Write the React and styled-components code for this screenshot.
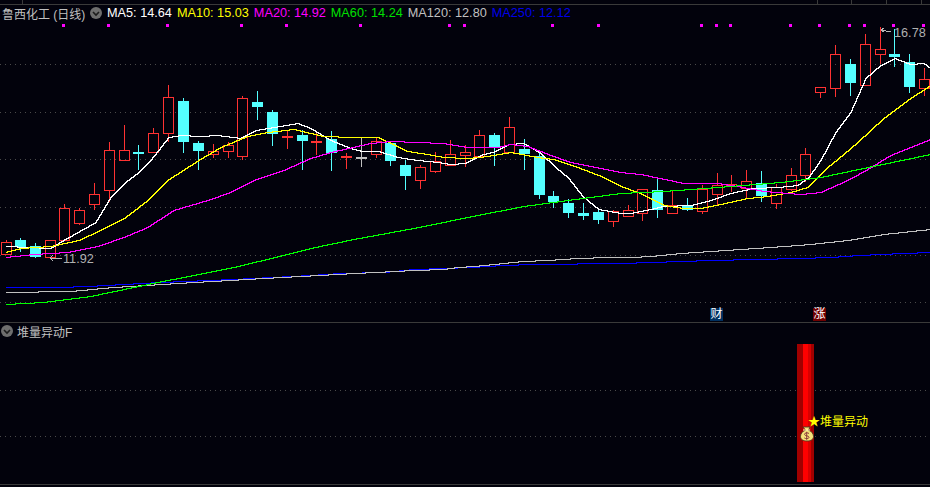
import React from 'react';
import styled, { createGlobalStyle } from 'styled-components';

const GlobalStyle = createGlobalStyle`
  html, body {
    margin: 0;
    padding: 0;
    background: #02020c;
  }
`;

const FONT = `"Liberation Sans", "Noto Sans CJK SC", sans-serif`;

const Page = styled.div`
  width: 930px;
  height: 487px;
  overflow: hidden;
  display: flex;
  flex-direction: column;
  background: #02020c;
  font-family: ${FONT};
`;

const MainPane = styled.div`
  position: relative;
  height: 322px;
  flex: none;
  border-bottom: 1px solid #3a3a3a;
`;

const SubPane = styled.div`
  position: relative;
  flex: 1;
  border-bottom: 1px solid #3a3a3a;
  margin-bottom: 2px;
`;

const Chart = styled.svg`
  display: block;
`;

const Legend = styled.div`
  position: absolute;
  top: 5px;
  left: 2px;
  height: 16px;
  display: flex;
  align-items: center;
  gap: 5px;
  font-size: 12.7px;
  white-space: nowrap;
`;

const SubLegend = styled(Legend)`
  top: 0;
  left: 1px;
  gap: 4px;
  font-size: 12px;
  color: #c0c0c0;
`;

const Title = styled.span`
  width: 81px;
  color: #c0c0c0;
  font-size: 12px;
  margin-right: 2px;
`;

const LegendItem = styled.span`
  color: ${p => p.$color};
`;

const Toggle = styled.span`
  width: 12px;
  height: 12px;
  border-radius: 50%;
  background: #6e6e6e;
  display: flex;
  align-items: center;
  justify-content: center;
`;

const Badge = styled.span`
  position: absolute;
  top: 308px;
  left: ${p => p.$x}px;
  width: 13px;
  height: 13px;
  background: ${p => p.$bg};
  color: #fff;
  font-size: 12px;
  line-height: 13px;
  text-align: center;
`;

const RED = '#ff3232';
const CYAN = '#54ffff';
const GRAY = '#c0c0c0';

// center x, body top, body bottom, wick top, wick bottom, kind (r red box, c cyan, d red flat, g gray flat)
const candles = [
  [6, 242, 254, 240, 254, 'r'], [20, 240, 247, 238, 252, 'c'], [35, 246, 257, 243, 258, 'c'],
  [50, 240, 257, 240, 258, 'r'], [64, 208, 240, 204, 240, 'r'], [79, 210, 223, 208, 225, 'r'],
  [94, 194, 204, 183, 210, 'r'], [109, 150, 190, 142, 202, 'r'], [124, 150, 160, 125, 160, 'r'],
  [138, 152, 154, 145, 170, 'c'], [153, 133, 152, 128, 152, 'r'], [168, 97, 133, 85, 142, 'r'],
  [183, 101, 142, 98, 153, 'c'], [198, 143, 151, 141, 170, 'c'], [213, 151, 154, 144, 158, 'r'],
  [228, 145, 151, 142, 158, 'r'], [242, 98, 156, 96, 160, 'r'], [257, 102, 107, 91, 120, 'c'],
  [272, 112, 134, 110, 146, 'c'], [287, 136, 137, 130, 149, 'd'], [302, 135, 141, 130, 170, 'c'],
  [316, 141, 142, 133, 155, 'd'], [331, 139, 153, 131, 171, 'c'], [346, 156, 157, 153, 169, 'd'],
  [361, 157, 158, 137, 167, 'g'], [376, 141, 154, 137, 158, 'r'], [390, 143, 161, 143, 166, 'c'],
  [405, 165, 176, 160, 190, 'c'], [420, 167, 180, 165, 189, 'r'], [435, 161, 171, 152, 173, 'r'],
  [450, 154, 165, 140, 165, 'r'], [465, 152, 155, 145, 167, 'r'], [479, 135, 156, 130, 156, 'r'],
  [494, 135, 147, 133, 166, 'c'], [509, 127, 152, 117, 152, 'r'], [524, 149, 154, 139, 170, 'c'],
  [539, 156, 195, 152, 199, 'c'], [553, 196, 202, 191, 208, 'c'], [568, 203, 213, 199, 218, 'c'],
  [583, 213, 216, 203, 220, 'c'], [598, 212, 220, 210, 224, 'c'], [613, 211, 221, 210, 227, 'r'],
  [628, 210, 216, 205, 217, 'r'], [642, 189, 213, 189, 221, 'r'], [657, 190, 210, 179, 218, 'c'],
  [672, 205, 213, 191, 213, 'r'], [687, 205, 210, 198, 211, 'c'], [702, 189, 211, 185, 214, 'r'],
  [717, 185, 194, 173, 205, 'r'], [731, 184, 186, 175, 192, 'r'], [746, 181, 188, 170, 198, 'r'],
  [761, 183, 196, 171, 202, 'c'], [776, 187, 203, 184, 209, 'r'], [791, 175, 189, 168, 191, 'r'],
  [805, 154, 175, 148, 182, 'r'], [820, 87, 92, 87, 98, 'r'], [835, 54, 88, 45, 97, 'r'],
  [850, 64, 83, 59, 96, 'c'], [865, 44, 85, 34, 85, 'r'], [880, 49, 54, 27, 64, 'r'],
  [894, 54, 57, 29, 67, 'c'], [909, 62, 87, 54, 93, 'c'], [924, 79, 88, 68, 96, 'r'],
];

const averages = [
  {
    color: '#ffffff',
    points: '5,246 50,248 63,240 95,222 110,197 125,182 138,172 150,160 168,137 180,135 200,136 217,135 240,138 255,130 267,128 297,123 310,128 330,140 350,148 362,151 378,151 397,157 417,160 438,162 450,164 465,163 480,155 495,151 508,144 523,143 540,153 555,167 568,178 582,196 598,209 620,213 630,213 650,209 663,206 690,205 710,200 730,193 753,188 777,187 797,185 808,177 820,160 835,132 850,112 865,78 880,65 894,58 910,64 923,63 930,68',
  },
  {
    color: '#ffff00',
    points: '5,252 20,248 50,246 78,240 100,230 125,217 147,200 167,180 198,160 220,147 247,136 267,132 293,129 310,133 323,136 353,137 377,137 393,144 407,151 427,154 443,157 467,158 487,156 510,152 537,157 553,159 577,167 603,177 620,186 640,193 663,205 683,208 700,208 720,204 747,198 767,196 790,192 807,187 827,167 837,159 857,142 883,118 910,98 930,85',
  },
  {
    color: '#ff00ff',
    points: '5,257 33,254 67,252 97,246 123,237 147,227 173,210 207,200 227,193 253,180 283,170 310,158 330,152 370,143 390,141 443,143 467,147 497,147 510,144 527,146 550,155 570,162 620,172 640,174 683,183 717,183 737,186 763,191 800,194 820,192 847,180 867,169 890,155 905,149 930,139',
  },
  {
    color: '#0000ff',
    points: '5,287 57,287 87,286 160,282 233,279 310,275 340,273 383,272 413,269 443,268 470,267 503,265 532,264 620,263 680,261 710,260 755,259 798,258 830,257 858,255 903,253 930,252',
  },
  {
    color: '#c0c0c0',
    points: '5,292 70,291 113,287 177,283 263,278 355,273 413,270 443,269 457,267 473,266 503,263 522,261 547,260 577,258 607,257 630,257 650,256 680,253 710,251 740,249 770,247 810,244 847,240 883,234 930,229',
  },
  {
    color: '#00ff00',
    points: '5,304 43,302 90,296 133,287 157,282 193,275 233,267 283,255 310,248 353,239 413,228 477,215 523,206 567,200 620,193 663,191 717,187 780,182 820,177 877,165 930,154',
  },
];

const markers = [63, 108, 167, 241, 286, 360, 449, 464, 552, 598, 701, 716, 730, 790, 819, 849, 864, 893, 923];
const mainGrid = [64, 112, 159, 207, 255, 302];
const subGrid = [67, 113];
const rulerTicks = [22, 817, 851, 886, 921];

const legend = [
  { label: 'MA5: 14.64', color: '#ffffff' },
  { label: 'MA10: 15.03', color: '#ffff00' },
  { label: 'MA20: 14.92', color: '#ff00ff' },
  { label: 'MA60: 14.24', color: '#00e000' },
  { label: 'MA120: 12.80', color: '#c0c0c0' },
  { label: 'MA250: 12.12', color: '#0000e8' },
];

// the terminal draws its lines without smoothing, so walk them pixel by pixel
const stairPath = points => {
  const pts = points.split(' ').map(p => p.split(',').map(Number));
  let d = `M${pts[0][0]} ${pts[0][1]}`;
  for (let i = 1; i < pts.length; i++) {
    const [x0, y0] = pts[i - 1];
    const [x1, y1] = pts[i];
    for (let x = x0 + 1; x <= x1; x++) {
      d += `H${x}V${Math.round(y0 + ((y1 - y0) * (x - x0)) / (x1 - x0))}`;
    }
  }
  return d;
};

const Chevron = () => (
  <svg width="12" height="12" viewBox="0 0 12 12">
    <path d="M3 5l3 3 3-3" fill="none" stroke="#1c1c1c" strokeWidth="1.6" />
  </svg>
);

const GridLine = ({ y }) => (
  <line x1="0" x2="930" y1={y + 0.5} y2={y + 0.5} stroke="#4a4a4a" strokeDasharray="1 4" />
);

const Candle = ({ data }) => {
  const [x, top, bottom, wickTop, wickBottom, kind] = data;
  const color = kind === 'c' ? CYAN : kind === 'g' ? GRAY : RED;
  const flat = kind === 'd' || kind === 'g';
  return (
    <g stroke={color} fill="none">
      <line x1={x + 0.5} x2={x + 0.5} y1={wickTop} y2={top} />
      <line x1={x + 0.5} x2={x + 0.5} y1={bottom} y2={wickBottom} />
      {flat ? (
        <rect x={x - 5} y={top} width="11" height="2" fill={color} stroke="none" />
      ) : kind === 'c' ? (
        <rect x={x - 5} y={top} width="11" height={bottom - top} fill={color} stroke="none" />
      ) : (
        <rect x={x - 4.5} y={top + 0.5} width="10" height={bottom - top} />
      )}
    </g>
  );
};

const PriceNote = ({ points, x, y, children }) => (
  <g>
    <polyline points={points} fill="none" stroke="#b8b8b8" />
    <text x={x} y={y} fill="#b0b0b0" fontSize="12.7" fontFamily={FONT}>{children}</text>
  </g>
);

const MoneyBag = () => (
  <g>
    <path d="M803 427h7l-1.500 3.200c3.500 1 5 4 5 6.300 0 3-2.800 4.500-6.500 4.500s-6.500-1.500-6.500-4.500c0-2.300 1.500-5.300 5-6.300z" fill="#f5e27a" stroke="#4a3a20" strokeWidth="0.9" />
    <path d="M803 430h7" stroke="#fff6c0" strokeWidth="1" />
    <path d="M809 433.500c-1-1-4.500-1-4.500 .8 0 2 4.500 1 4.500 3 0 1.700-3.500 1.700-4.700 .6M806.700 431.800v8" fill="none" stroke="#8a3a3a" strokeWidth="1" />
  </g>
);

export default function App() {
  return (
    <Page>
      <GlobalStyle />
      <MainPane>
        <Chart width="930" height="322" viewBox="0 0 930 322" shapeRendering="crispEdges">
          <line x1="0" x2="930" y1="4.500" y2="4.500" stroke="#3a3a3a" />
          {rulerTicks.map(x => (
            <line key={x} x1={x + 0.5} x2={x + 0.5} y1="0" y2="4" stroke="#3a3a3a" />
          ))}
          {mainGrid.map(y => <GridLine key={y} y={y} />)}
          {markers.map(x => <rect key={x} x={x - 1} y="24" width="3" height="3" fill="#ff00ff" />)}
          {candles.map(c => <Candle key={c[0]} data={c} />)}
          <g transform="translate(0.5 0.5)">
            {averages.map(line => (
              <path key={line.color} d={stairPath(line.points)} fill="none" stroke={line.color} />
            ))}
          </g>
          <PriceNote points="881,30 884,28 881,30 884,32 881,30 891,32" x={894} y={37}>16.78</PriceNote>
          <PriceNote points="53,255 50,258 53,261 50,258 62,258" x={63} y={263}>11.92</PriceNote>
        </Chart>
        <Legend>
          <Title>鲁西化工 (日线)</Title>
          <Toggle><Chevron /></Toggle>
          {legend.map(item => (
            <LegendItem key={item.label} $color={item.color}>{item.label}</LegendItem>
          ))}
        </Legend>
        <Badge $x={710} $bg="#003060">财</Badge>
        <Badge $x={813} $bg="#700000">涨</Badge>
      </MainPane>
      <SubPane>
        <Chart width="930" height="161" viewBox="0 323 930 161" shapeRendering="crispEdges">
          {subGrid.map(y => <GridLine key={y} y={y + 323} />)}
          <rect x="797" y="344" width="17" height="138" fill="#a00000" />
          <rect x="803" y="344" width="5" height="138" fill="#ff0000" />
          <rect x="808" y="344" width="3" height="138" fill="#d80000" />
          <g shapeRendering="auto">
            <MoneyBag />
            <text x="808" y="426" fill="#ffff00" fontSize="12" fontFamily={FONT}>★堆量异动</text>
          </g>
        </Chart>
        <SubLegend>
          <Toggle><Chevron /></Toggle>
          <span>堆量异动F</span>
        </SubLegend>
      </SubPane>
    </Page>
  );
}
